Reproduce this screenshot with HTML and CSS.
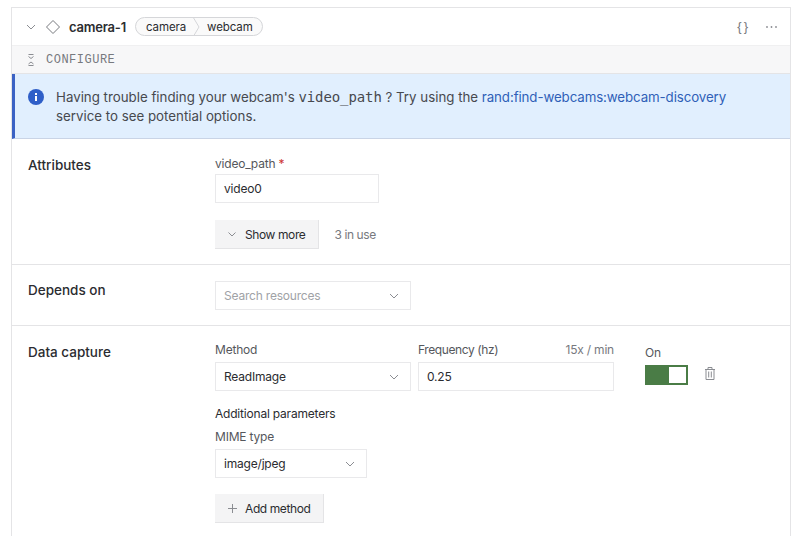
FILE: index.html
```html
<!DOCTYPE html>
<html>
  <head>
    <link rel="stylesheet" href="styles.css">
  </head>

  <body>
    <div class="card">
      <!-- header -->
      <div class="header">
        <svg class="chevron head-chevron" width="10" height="6" viewBox="0 0 10 6"><path d="M1 1l4 4 4-4"/></svg>
        <svg class="diamond" width="16" height="16" viewBox="0 0 16 16"><path d="M8 1.500L14.500 8 8 14.500 1.500 8z"/></svg>
        <span class="name">camera-1</span>
        <div class="tags">
          <span class="tag">camera</span>
          <svg class="tag-sep" width="8" height="20" viewBox="0 0 8 20"><path d="M1 0l6 10-6 10"/></svg>
          <span class="tag">webcam</span>
        </div>
        <div class="actions">
          <span class="braces">{}</span>
          <svg class="dots" width="11" height="4" viewBox="0 0 11 4"><circle cx="1" cy="2" r=".9"/><circle cx="5.500" cy="2" r=".9"/><circle cx="10" cy="2" r=".9"/></svg>
        </div>
      </div>

      <!-- configure bar -->
      <div class="configure">
        <svg class="collapse" width="8" height="12" viewBox="0 0 8 12"><path d="M1.500.500h5M1.500 2.500L4 4.500l2.500-2M1.500 10L4 8l2.500 2M1.500 11.500h5"/></svg>
        <span>CONFIGURE</span>
      </div>

      <!-- info banner -->
      <div class="banner">
        <svg class="info" width="16" height="16" viewBox="0 0 16 16"><circle cx="8" cy="8" r="8"/><rect x="7" y="7" width="2" height="5" fill="#fff"/><rect x="7" y="4" width="2" height="2" fill="#fff"/></svg>
        <p>Having trouble finding your webcam's <code>video_path</code> ? Try using the <a href="#">rand:find-webcams:webcam-discovery</a> service to see potential options.</p>
      </div>

      <!-- attributes -->
      <div class="section attributes">
        <h3>Attributes</h3>
        <div class="fields">
          <label class="label">video_path <span class="req">*</span></label>
          <div class="input w-path">video0</div>
          <div class="more-row">
            <button class="btn">
              <svg class="chevron" width="8" height="5" viewBox="0 0 8 5"><path d="M.5.500L4 4 7.500.500"/></svg>
              Show more
            </button>
            <span class="muted">3 in use</span>
          </div>
        </div>
      </div>

      <!-- depends on -->
      <div class="section depends">
        <h3>Depends on</h3>
        <div class="fields">
          <div class="input select w-method placeholder">
            Search resources
            <svg class="chevron" width="10" height="6" viewBox="0 0 10 6"><path d="M1 1l4 4 4-4"/></svg>
          </div>
        </div>
      </div>

      <!-- data capture -->
      <div class="section capture">
        <h3>Data capture</h3>
        <div class="fields">
          <div class="method-row">
            <div class="w-method">
              <label class="label">Method</label>
              <div class="input select">
                ReadImage
                <svg class="chevron" width="10" height="6" viewBox="0 0 10 6"><path d="M1 1l4 4 4-4"/></svg>
              </div>
            </div>
            <div class="w-method">
              <label class="label label-split">Frequency (hz) <span class="muted">15x / min</span></label>
              <div class="input">0.25</div>
            </div>
            <div class="switch-col">
              <label class="label">On</label>
              <div class="switch"><span class="knob"></span></div>
            </div>
            <svg class="trash" width="10" height="13" viewBox="0 0 10 13"><path d="M0 2.500h10M3 2.500V.500h4v2M1 2.500v10h8v-10M3.700 4.500v6M6.300 4.500v6"/></svg>
          </div>
          <div class="extra-title">Additional parameters</div>
          <label class="label">MIME type</label>
          <div class="input select w-mime">
            image/jpeg
            <svg class="chevron" width="10" height="6" viewBox="0 0 10 6"><path d="M1 1l4 4 4-4"/></svg>
          </div>
          <button class="btn add-btn">
            <svg class="plus" width="9" height="9" viewBox="0 0 9 9"><path d="M4.500 0v9M0 4.500h9"/></svg>
            Add method
          </button>
        </div>
      </div>
    </div>
  </body>
</html>
```

FILE: styles.css
```css
html, body {
  height: 100%;
  overflow: hidden;
}

body {
  margin: 0;
  background: #fff;
  color: #2b2c30;
  font-family: Inter, "Liberation Sans", sans-serif;
  font-size: 12px;
  letter-spacing: -.2px;
}

svg {
  flex: none;
  fill: none;
}

/* card is cut off by the window, so no bottom border */
.card {
  box-sizing: border-box;
  margin: 7px 9px 0 11px;
  border: 1px solid #e4e4e6;
  border-bottom: 0;
  height: calc(100vh - 7px);
}

.chevron {
  stroke: #8b8d92;
  stroke-width: 1;
}

/* header */
.header {
  height: 37px;
  display: flex;
  align-items: center;
  padding-left: 14px;
}

.head-chevron {
  margin-right: 9px;
}

.diamond {
  stroke: #77797e;
  stroke-width: 1;
  margin-right: 8px;
}

.name {
  font-size: 13px;
  font-weight: 600;
  letter-spacing: -.2px;
  white-space: nowrap;
  width: 58px;
  margin-right: 8px;
}

.tags {
  display: flex;
  align-items: center;
  height: 17px;
  border: 1px solid #d5d6d9;
  border-radius: 10px;
  background: #fafafa;
  overflow: hidden;
}

.tag {
  padding: 0 6px 0 10px;
  font-size: 11.500px;
  letter-spacing: -.1px;
}

.tag-sep {
  stroke: #d5d6d9;
}

.tag-sep + .tag {
  padding: 0 9px 0 7px;
}

.actions {
  margin-left: auto;
  display: flex;
  align-items: center;
  gap: 16px;
  padding-right: 13px;
}

.braces {
  font-family: "Liberation Sans", sans-serif;
  font-size: 13px;
  color: #77797e;
  letter-spacing: 2px;
}

.dots {
  fill: #8b8d92;
}

/* configure bar */
.configure {
  box-sizing: border-box;
  height: 29px;
  display: flex;
  align-items: center;
  gap: 11px;
  padding-left: 15px;
  background: #f7f7f8;
  border-top: 1px solid #f0f0f1;
  border-bottom: 1px solid #e4e4e6;
  font-family: "Liberation Mono", monospace;
  font-size: 12px;
  letter-spacing: .5px;
  color: #77797e;
}

.collapse {
  stroke: #8b8d92;
}

/* banner */
.banner {
  box-sizing: border-box;
  height: 65px;
  display: flex;
  gap: 12px;
  padding: 14px 16px 0 13px;
  background: #e1effe;
  border-left: 3px solid #3b62c4;
  border-bottom: 1px solid #c9d4e6;
  font-size: 13.300px;
  letter-spacing: 0;
  line-height: 19px;
  color: #47494e;
}

.info {
  fill: #2f5fc8;
  margin-top: 1px;
}

.banner p {
  margin: 0;
}

.banner code {
  font-family: "DejaVu Sans Mono", monospace;
  font-size: 14px;
  letter-spacing: -.1px;
}

.banner a {
  color: #2f5fb8;
  text-decoration: none;
  letter-spacing: -.1px;
}

/* sections */
.section {
  display: grid;
  grid-template-columns: 187px 1fr;
  padding-left: 16px;
  border-bottom: 1px solid #e4e4e6;
  box-sizing: border-box;
}

.section h3 {
  margin: 0;
  font-size: 13.500px;
  font-weight: 500;
  letter-spacing: 0;
  line-height: 18px;
}

.attributes {
  height: 126px;
  padding-top: 17px;
}

.depends {
  height: 61px;
  padding-top: 16px;
}

.capture {
  border-bottom: 0;
  padding-top: 17px;
}

.label {
  display: block;
  height: 18px;
  line-height: 18px;
  color: #55575c;
}

.attributes .label {
  margin-top: -1px;
}

.capture .fields {
  margin-top: -2px;
}

.req {
  color: #c33;
}

.input {
  box-sizing: border-box;
  height: 29px;
  display: flex;
  align-items: center;
  justify-content: space-between;
  padding: 0 8px;
  border: 1px solid #e9e9eb;
  background: #fff;
}

.select {
  padding-right: 11px;
}

.placeholder {
  color: #a0a2a6;
}

.w-path {
  width: 164px;
  margin-top: 1px;
}

.w-method {
  width: 196px;
}

.w-mime {
  width: 152px;
  margin-top: 3px;
}

.more-row {
  display: flex;
  align-items: center;
  gap: 15px;
  margin-top: 17px;
}

.muted {
  color: #77797e;
  letter-spacing: -.4px;
}

.btn {
  box-sizing: border-box;
  height: 29px;
  display: flex;
  align-items: center;
  gap: 9px;
  padding: 0 13px;
  border: 0;
  border-bottom: 1px solid #e4e4e6;
  border-right: 1px solid #e4e4e6;
  background: #f4f4f5;
  font: inherit;
  letter-spacing: -.4px;
  color: #2b2c30;
}

.method-row {
  display: flex;
  gap: 7px;
}

.method-row .label {
  margin-bottom: 3px;
}

.label-split {
  display: flex;
  justify-content: space-between;
  letter-spacing: -.4px;
}

.label-split .muted {
  letter-spacing: -.2px;
}

.switch-col {
  margin-left: 24px;
  padding-top: 3px;
}

.switch {
  box-sizing: border-box;
  width: 43px;
  height: 20px;
  display: flex;
  justify-content: flex-end;
  background: #4a7c46;
  border: 2px solid #4a7c46;
}

.knob {
  width: 17px;
  background: #fff;
}

.trash {
  stroke: #8b8d92;
  margin: 26px 0 0 10px;
}

.extra-title {
  margin-top: 14px;
  height: 18px;
  line-height: 18px;
}

.extra-title + .label {
  margin-top: 5px;
}

.add-btn {
  margin-top: 16px;
  gap: 8px;
}

.plus {
  stroke: #8b8d92;
}
```
